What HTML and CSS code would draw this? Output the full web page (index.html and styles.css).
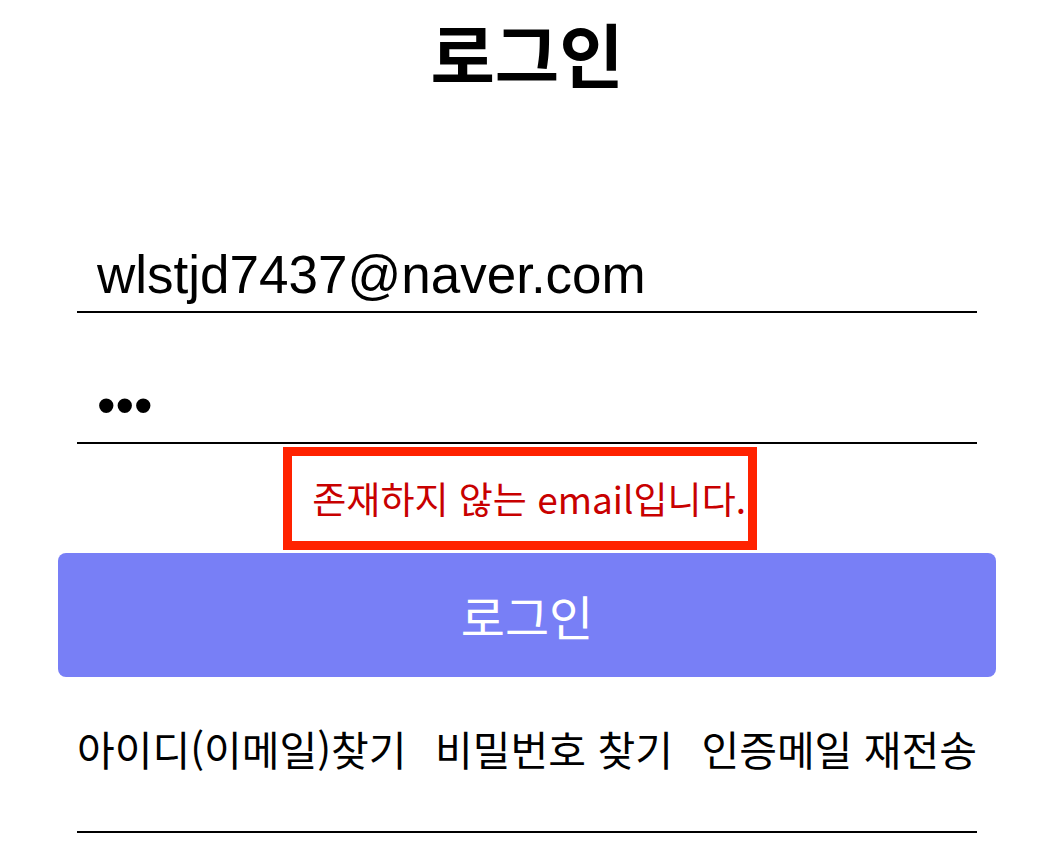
FILE: index.html
```html
<!DOCTYPE html>
<html lang="ko">
<head>
<meta charset="utf-8">
<title>로그인</title>
<link rel="stylesheet" href="styles.css">
</head>
<body>
<main class="login">
  <h1 class="login-title">로그인</h1>
  <form class="login-form">
    <div class="field field-email">
      <input class="field-input" type="text" value="wlstjd7437@naver.com">
    </div>
    <div class="field field-password">
      <input class="field-input" type="password" value="abc">
    </div>
    <div class="error-box">
      <p class="error-text">존재하지 않는 email입니다.</p>
    </div>
    <button class="login-button" type="button">로그인</button>
  </form>
  <nav class="login-links">
    <a class="login-link" href="#">아이디(이메일)찾기</a>
    <a class="login-link" href="#">비밀번호 찾기</a>
    <a class="login-link" href="#">인증메일 재전송</a>
  </nav>
</main>
</body>
</html>
```

FILE: styles.css
```css
* { box-sizing: border-box; }

html, body {
  margin: 0;
  padding: 0;
  background: #ffffff;
}

body {
  font-family: "Noto Sans CJK KR", "Liberation Sans", sans-serif;
  color: #000;
}

.login {
  width: 938px;
  margin-left: 58px;
  display: flex;
  flex-direction: column;
}

.login-title {
  margin: 0;
  height: 110px;
  font-size: 70px;
  font-weight: 700;
  line-height: 106px;
  text-align: center;
}

.login-form {
  display: flex;
  flex-direction: column;
}

.field {
  width: 900px;
  margin-left: 19px;
  border-bottom: 2px solid #000;
}

.field-email {
  margin-top: 128px;
}

.field-password {
  margin-top: 56px;
}

.field-input {
  display: block;
  width: 100%;
  height: 73px;
  border: 0;
  outline: none;
  padding: 0 0 0 20px;
  background: transparent;
  font-family: "Liberation Sans", Arial, sans-serif;
  font-size: 53px;
  color: #000;
}

.error-box {
  align-self: flex-start;
  margin-left: 225px;
  margin-top: 3px;
  width: 474px;
  height: 103px;
  border: 9px solid #ff2200;
  display: flex;
  align-items: center;
  justify-content: flex-end;
  padding-right: 2px;
}

.error-text {
  margin: 0;
  font-size: 37px;
  line-height: 1;
  color: #c80000;
  white-space: nowrap;
}

.login-button {
  margin-top: 3px;
  height: 124px;
  width: 938px;
  border: 0;
  border-radius: 8px;
  background: #787ff6;
  color: #fff;
  font-family: "Noto Sans CJK KR", sans-serif;
  font-size: 48px;
  padding: 0;
  cursor: pointer;
}

.login-links {
  width: 900px;
  margin-left: 19px;
  height: 156px;
  border-bottom: 2px solid #000;
  display: flex;
  justify-content: space-between;
  align-items: center;
  padding-bottom: 12px;
}

.login-link {
  font-size: 41px;
  color: #000;
  text-decoration: none;
  white-space: nowrap;
}
```
